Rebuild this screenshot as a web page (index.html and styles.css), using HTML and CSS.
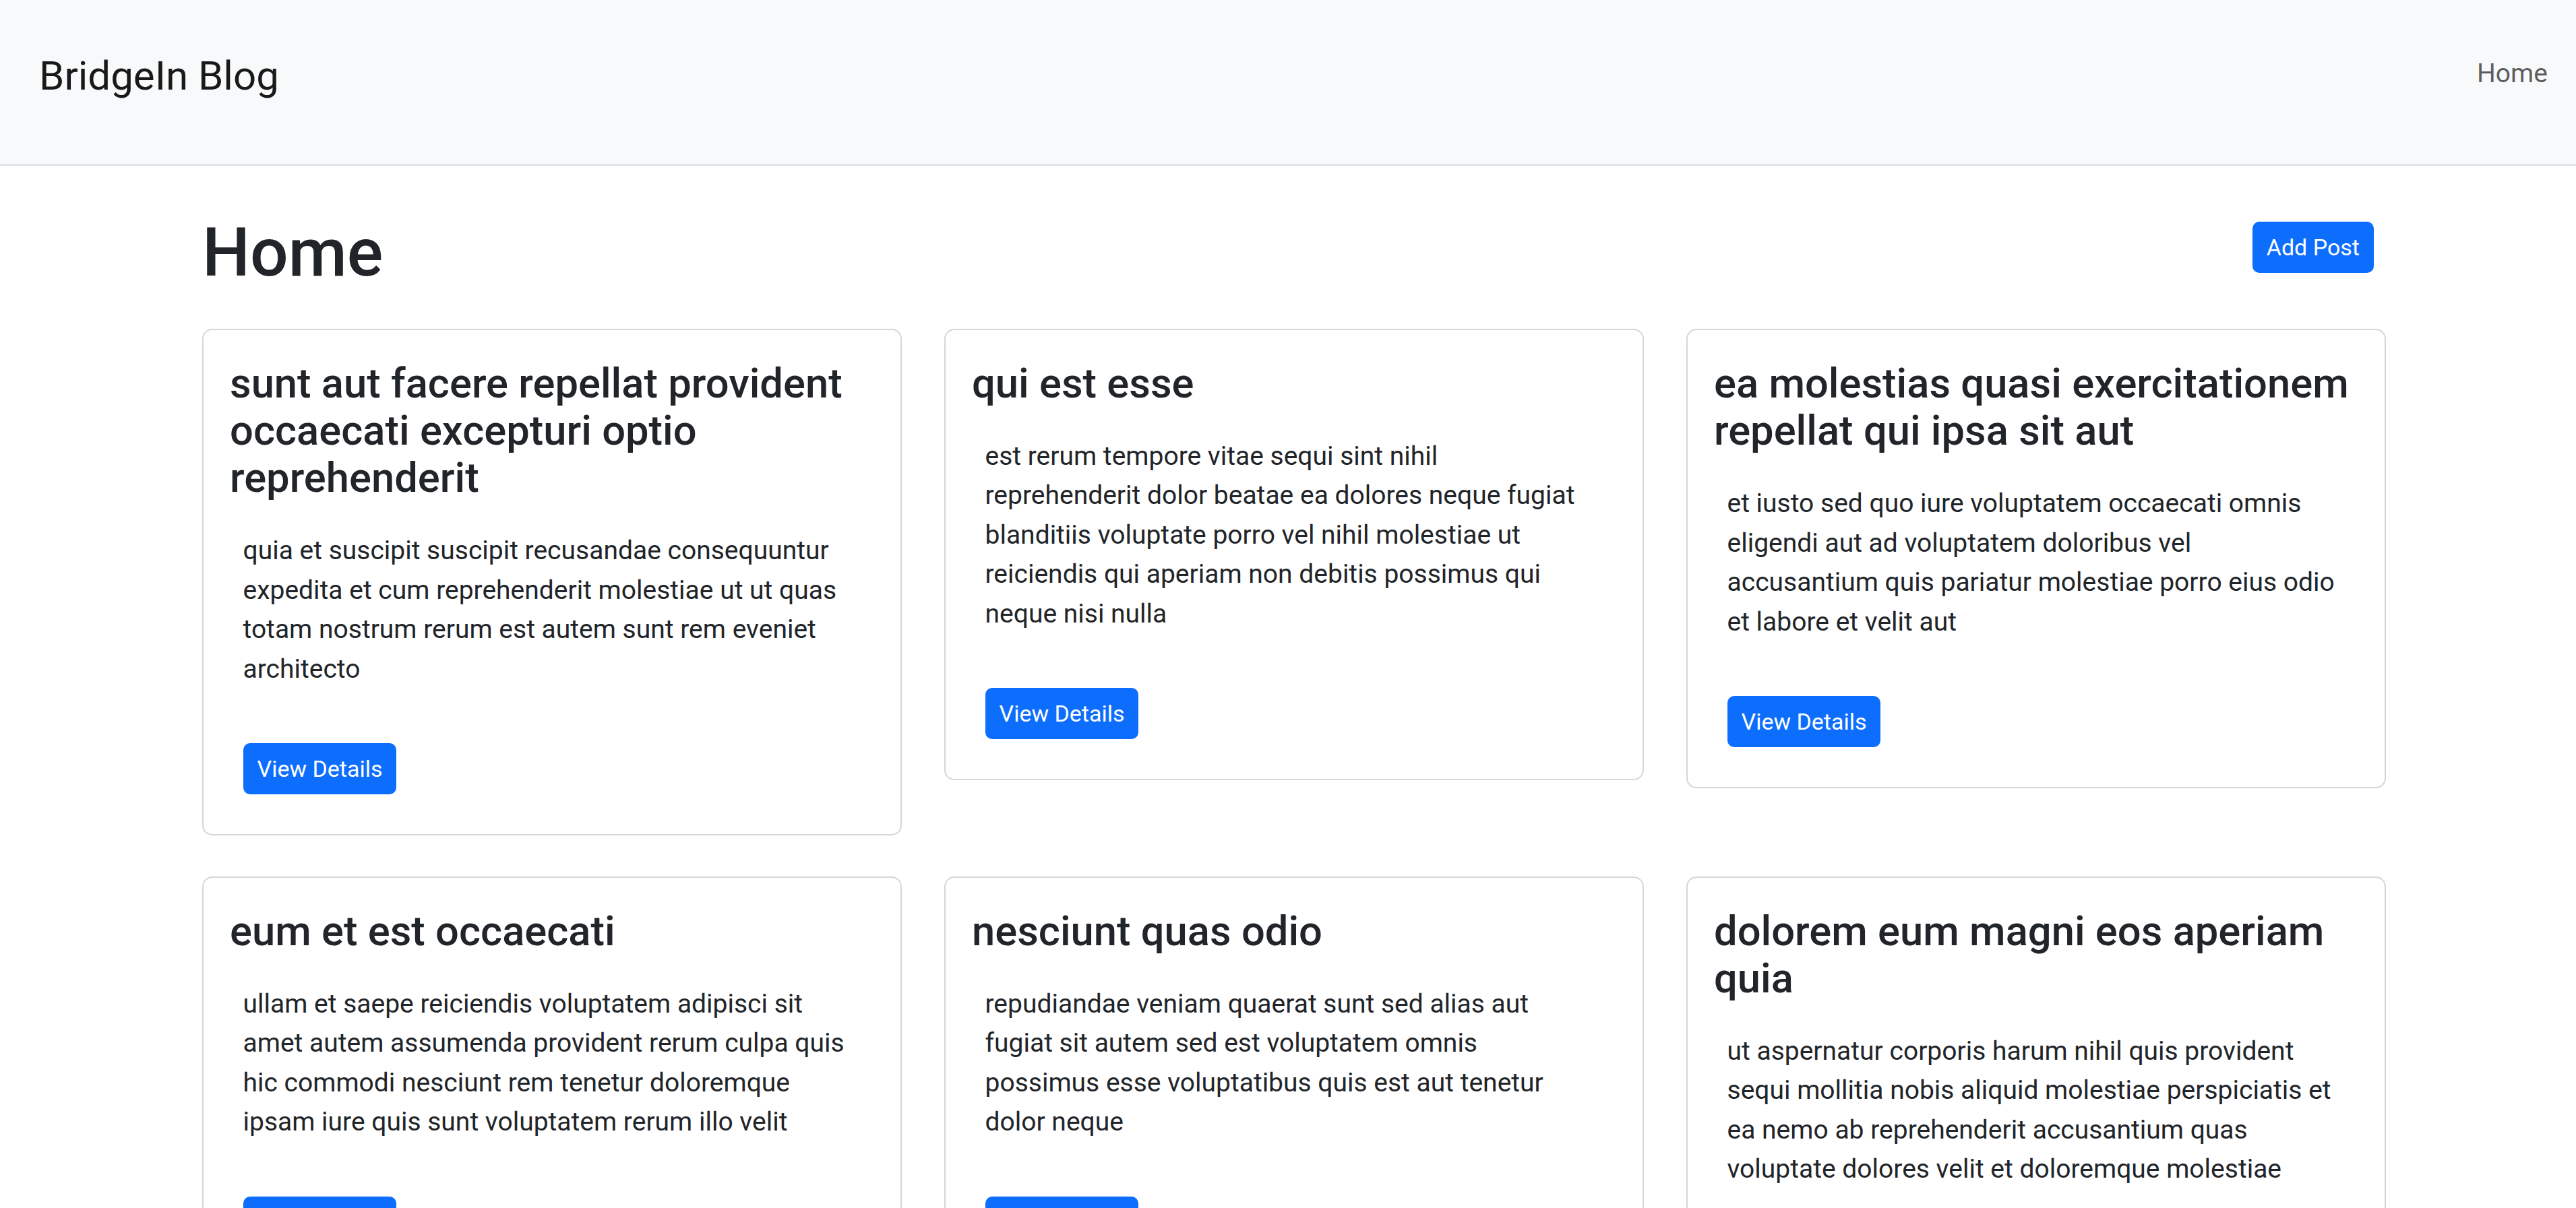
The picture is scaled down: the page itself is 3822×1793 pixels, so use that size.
FILE: index.html
```html
<!DOCTYPE html>
<html lang="en">
<head>
<meta charset="utf-8">
<title>BridgeIn Blog</title>
<link rel="stylesheet" href="styles.css">
</head>
<body>
<nav class="navbar">
  <a class="brand" href="#">BridgeIn Blog</a>
  <a class="nav-link" href="#">Home</a>
</nav>
<main class="container">
  <div class="page-head">
    <h1 class="page-title">Home</h1>
    <a class="btn" href="#">Add Post</a>
  </div>
  <div class="grid">
    <div class="card">
      <h4 class="card-title">sunt aut facere repellat provident occaecati excepturi optio reprehenderit</h4>
      <p class="card-text">quia et suscipit suscipit recusandae consequuntur expedita et cum reprehenderit molestiae ut ut quas totam nostrum rerum est autem sunt rem eveniet architecto</p>
      <a class="btn btn-card" href="#">View Details</a>
    </div>
    <div class="card">
      <h4 class="card-title">qui est esse</h4>
      <p class="card-text">est rerum tempore vitae sequi sint nihil reprehenderit dolor beatae ea dolores neque fugiat blanditiis voluptate porro vel nihil molestiae ut reiciendis qui aperiam non debitis possimus qui neque nisi nulla</p>
      <a class="btn btn-card" href="#">View Details</a>
    </div>
    <div class="card">
      <h4 class="card-title">ea molestias quasi exercitationem repellat qui ipsa sit aut</h4>
      <p class="card-text">et iusto sed quo iure voluptatem occaecati omnis eligendi aut ad voluptatem doloribus vel accusantium quis pariatur molestiae porro eius odio et labore et velit aut</p>
      <a class="btn btn-card" href="#">View Details</a>
    </div>
    <div class="card">
      <h4 class="card-title">eum et est occaecati</h4>
      <p class="card-text">ullam et saepe reiciendis voluptatem adipisci sit amet autem assumenda provident rerum culpa quis hic commodi nesciunt rem tenetur doloremque ipsam iure quis sunt voluptatem rerum illo velit</p>
      <a class="btn btn-card" href="#">View Details</a>
    </div>
    <div class="card">
      <h4 class="card-title">nesciunt quas odio</h4>
      <p class="card-text">repudiandae veniam quaerat sunt sed alias aut fugiat sit autem sed est voluptatem omnis possimus esse voluptatibus quis est aut tenetur dolor neque</p>
      <a class="btn btn-card" href="#">View Details</a>
    </div>
    <div class="card">
      <h4 class="card-title">dolorem eum magni eos aperiam quia</h4>
      <p class="card-text">ut aspernatur corporis harum nihil quis provident sequi mollitia nobis aliquid molestiae perspiciatis et ea nemo ab reprehenderit accusantium quas voluptate dolores velit et doloremque molestiae</p>
      <a class="btn btn-card" href="#">View Details</a>
    </div>
  </div>
</main>
</body>
</html>
```
FILE: styles.css
```css
html, body {
  margin: 0;
  padding: 0;
  overflow: hidden;
}
body {
  font-family: Roboto, "Liberation Sans", Arial, sans-serif;
  color: #212529;
  background: #fff;
  font-size: 39px;
  line-height: 58.5px;
}
a { text-decoration: none; }

.navbar {
  display: flex;
  justify-content: space-between;
  align-items: flex-start;
  height: 244px;
  padding: 0 42px 0 58px;
  background: #f8f9fa;
  border-bottom: 2px solid #dcdee0;
}
.brand {
  margin-top: 69px;
  font-size: 60px;
  line-height: 87.75px;
  color: rgba(0, 0, 0, 0.9);
}
.nav-link {
  margin-top: 80px;
  font-size: 39px;
  line-height: 58.5px;
  color: rgba(0, 0, 0, 0.65);
}

.container {
  width: 3238px;
  margin-left: 300px;
  padding-top: 70px;
}
.page-head {
  display: flex;
  justify-content: space-between;
  align-items: flex-start;
  margin-bottom: 55px;
}
.page-title {
  margin: 0;
  font-size: 100px;
  line-height: 117px;
  font-weight: 500;
  color: #212529;
}
.btn {
  display: inline-block;
  background: #0d6efd;
  color: #fff;
  font-size: 34px;
  line-height: 51px;
  padding: 12.5px 21px;
  border-radius: 10px;
}
.page-head .btn {
  margin-top: 13px;
  margin-right: 16px;
}

.grid {
  display: grid;
  grid-template-columns: repeat(3, 1038px);
  column-gap: 63px;
  row-gap: 61px;
  align-items: start;
}
.card {
  display: flex;
  flex-direction: column;
  align-items: flex-start;
  padding: 43.9px 39px 58.5px;
  border: 2px solid #d6d6d6;
  border-radius: 15px;
  background: #fff;
}
.card-title {
  margin: 0;
  font-size: 61.5px;
  line-height: 70.2px;
  font-weight: 500;
  color: #212529;
}
.card-text {
  margin: 43.8px 0 0 19.5px;
  width: 905px;
}
.btn-card {
  margin: 81px 0 0 19.5px;
}
```
